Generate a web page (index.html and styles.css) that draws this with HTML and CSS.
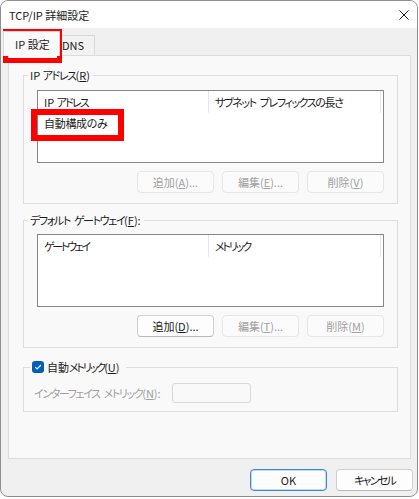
FILE: index.html
```html
<!DOCTYPE html>
<html lang="ja">
<head>
<meta charset="utf-8">
<title>TCP/IP 詳細設定</title>
<link rel="stylesheet" href="styles.css">
</head>
<body>
<div class="window">
  <div class="titlebar">
    <span class="title">TCP/IP 詳細設定</span>
    <svg class="close" width="10" height="10" viewBox="0 0 10 10"><path d="M0.5 0.5 L9.5 9.5 M9.5 0.5 L0.5 9.5" stroke="#1b1b1b" stroke-width="1" fill="none"/></svg>
  </div>
  <div class="content">
    <div class="tabs">
      <div class="tab active">IP 設定</div>
      <div class="tab">DNS</div>
    </div>
    <div class="panel">
      <fieldset class="group">
        <legend>IP <span class="ls-14">アドレス</span>(<u>R</u>)</legend>
        <div class="group-body g1">
          <div class="listbox">
            <div class="lv-head">
              <div class="col c1">IP <span class="ls-18">アドレス</span></div>
              <div class="col c2"><span class="ls-14 ws">サブネット プレフィックスの長さ</span></div>
            </div>
            <div class="lv-row">自動構成のみ</div>
          </div>
          <div class="btnrow">
            <button class="btn" disabled>追加(<u>A</u>)...</button>
            <button class="btn" disabled>編集(<u>E</u>)...</button>
            <button class="btn" disabled>削除(<u>V</u>)</button>
          </div>
        </div>
      </fieldset>
      <fieldset class="group gw">
        <legend><span class="ls-14 ws">デフォルト ゲートウェイ</span>(<u>F</u>):</legend>
        <div class="group-body g2">
          <div class="listbox">
            <div class="lv-head">
              <div class="col c1"><span class="ls-24">ゲートウェイ</span></div>
              <div class="col c2"><span class="ls-22">メトリック</span></div>
            </div>
          </div>
          <div class="btnrow">
            <button class="btn">追加(<u>D</u>)...</button>
            <button class="btn" disabled>編集(<u>T</u>)...</button>
            <button class="btn" disabled>削除(<u>M</u>)</button>
          </div>
        </div>
      </fieldset>
      <fieldset class="group metric">
        <legend class="check-legend"><span class="checkbox"><svg width="12" height="12" viewBox="0 0 12 12"><path d="M3.2 6.2 L5.1 8 L8.9 4" stroke="#fff" stroke-width="1.1" fill="none"/></svg></span>自動<span class="ls-22">メトリック</span>(<u>U</u>)</legend>
        <div class="group-body g3">
          <span class="field-label"><span class="ls-14 ws">インターフェイス メトリック</span>(<u>N</u>):</span>
          <span class="textbox"></span>
        </div>
      </fieldset>
    </div>
  </div>
  <div class="footer">
    <button class="btn default">OK</button>
    <button class="btn"><span class="ls-18">キャンセル</span></button>
  </div>
</div>
<div class="mark mark-tab"></div>
<div class="mark mark-row"></div>
</body>
</html>
```

FILE: styles.css
```css
* { box-sizing: border-box; }

html, body {
  margin: 0;
  padding: 0;
  background: #ffffff;
}

body {
  font-family: "Noto Sans CJK JP", "Noto Sans", sans-serif;
  font-size: 11px;
  font-feature-settings: "palt";
  color: #1b1b1b;
  width: 419px;
  height: 499px;
  overflow: hidden;
}

.ls-14 { letter-spacing: -1.4px; }
.ls-18 { letter-spacing: -1.8px; }
.ls-22 { letter-spacing: -2.1px; }
.ls-24 { letter-spacing: -2.3px; }
.ws { word-spacing: 3px; }

.window {
  width: 418px;
  height: 497px;
  border: 1px solid #8e8e8e;
  border-radius: 8px;
  overflow: hidden;
  background: #f0f0f0;
  display: flex;
  flex-direction: column;
}

.titlebar {
  height: 27px;
  flex: none;
  background: #ffffff;
  display: flex;
  align-items: center;
  justify-content: space-between;
  padding: 0 8px 0 8px;
}

.title {
  line-height: 16px;
  padding-top: 1px;
}

.close { display: block; margin-top: 1px; }

.content {
  flex: 1;
  display: flex;
  flex-direction: column;
  padding: 0 6px 0 7px;
}

.tabs {
  height: 27px;
  flex: none;
  display: flex;
  align-items: flex-end;
  margin-left: -5px;
}

.tab {
  height: 20px;
  width: 35px;
  border: 1px solid #d9d9d9;
  border-left: none;
  border-bottom: none;
  background: #f2f2f2;
  line-height: 19px;
  padding-left: 2px;
}

.tab.active {
  position: relative;
  z-index: 1;
  height: 25px;
  width: 57px;
  margin-bottom: -1px;
  border-left: 1px solid #d9d9d9;
  background: #f9f9f9;
  padding-left: 11px;
  padding-top: 4px;
  line-height: 16px;
}

.panel {
  flex: 1;
  background: #f9f9f9;
  border: 1px solid #dcdcdc;
  padding: 11px 0 0 14px;
}

.group {
  margin: 0;
  padding: 0;
  width: 375px;
  border: 1px solid #dedede;
  min-inline-size: 0;
}

.group legend {
  margin-left: 4px;
  padding: 0 3px 0 2px;
  line-height: 16px;
  height: 16px;
}

.group.gw { margin-top: 8px; }
.group.metric { margin-top: 11px; }

.group-body { padding: 0 13px 10px 13px; }
.g1 { padding-top: 7px; }
.g2 { padding-top: 6px; }
.g3 {
  padding: 8px 11px 8px 10px;
  display: flex;
  align-items: center;
}

.listbox {
  height: 73px;
  border: 1px solid #868686;
  background: #ffffff;
}

.lv-head {
  display: flex;
  height: 22px;
}

.col {
  height: 22px;
  line-height: 22px;
  padding-left: 6px;
  border-right: 1px solid #e6e6e6;
  white-space: nowrap;
}

.c1 { width: 171px; }
.c2 { width: 172px; }

.lv-row {
  height: 20px;
  line-height: 20px;
  padding-left: 6px;
  letter-spacing: -0.3px;
}

.btnrow {
  margin-top: 8px;
  display: flex;
  justify-content: flex-end;
  gap: 8px;
}

.btn {
  font-family: inherit;
  font-size: 11px;
  font-feature-settings: "palt";
  width: 77px;
  height: 22px;
  padding: 0;
  border: 1px solid #d0d0d0;
  border-bottom-color: #b8b8b8;
  border-radius: 4px;
  background: #fdfdfd;
  color: #1b1b1b;
  line-height: 20px;
}

.btn:disabled {
  background: #fbfbfb;
  border-color: #e6e6e6;
  color: #a0a0a0;
}

.btn.default {
  border: 1px solid #3c86d4;
  box-shadow: inset 0 0 0 1px #c3dbf3;
}

.check-legend {
  margin-left: 6px !important;
  display: flex;
  align-items: center;
  padding: 0 6px 0 2px !important;
  white-space: pre;
}

.checkbox {
  width: 12px;
  height: 12px;
  border-radius: 3px;
  background: #005fb8;
  margin-right: 3px;
  display: flex;
}

.field-label {
  width: 138px;
  color: #a0a0a0;
  white-space: nowrap;
}

.textbox {
  width: 79px;
  height: 20px;
  border: 1px solid #d8d8d8;
  border-radius: 3px;
  background: #f9f9f9;
}

.footer {
  height: 37px;
  flex: none;
  display: flex;
  justify-content: flex-end;
  gap: 9px;
  padding: 10px 4px 5px 0;
}

.mark {
  position: absolute;
  border-style: solid;
  border-color: #ff0000;
}

.mark-tab {
  left: 3px;
  top: 29px;
  width: 59px;
  height: 34px;
  border-width: 5px;
}

.mark-row {
  left: 31px;
  top: 109px;
  width: 93px;
  height: 32px;
  border-width: 6px;
}
```
